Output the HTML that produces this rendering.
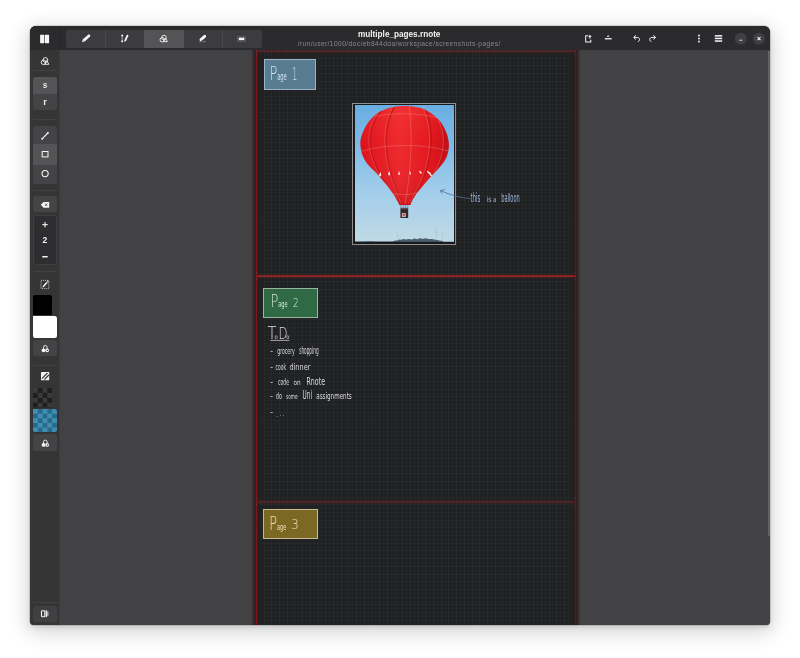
<!DOCTYPE html>
<html lang="en">
<head>
<meta charset="utf-8">
<title>multiple_pages.rnote</title>
<style>
*{box-sizing:border-box;margin:0;padding:0}
html,body{width:800px;height:658px;overflow:hidden;background:#fff;font-family:"Liberation Sans",sans-serif}
.abs{position:absolute}
#win{position:absolute;left:29.600px;top:26px;width:740.900px;height:599.400px;border-radius:6px 6px 4px 4px;overflow:hidden;background:#424244;
 box-shadow:0 0 0 0.5px rgba(0,0,0,.22),0 2px 5px rgba(0,0,0,.12),0 5px 20px 3px rgba(0,0,0,.16);}
#in{position:absolute;left:-29.600px;top:-26px;width:800px;height:658px}
#in>div,#in>svg{position:absolute}
#hdr{left:29.300px;top:26px;width:741.200px;height:24px;background:#2b2b2d}
#side{left:29.500px;top:50px;width:30.700px;height:576px;background:#353536;border-right:.8px solid #3c3c3e}
.sep{left:33px;width:24px;height:.8px;background:#414143}
.btn{background:#444446;border-radius:2.5px}
.on{background:#545456}
.t{position:absolute;white-space:nowrap;line-height:1;will-change:transform}
.hw{position:absolute;white-space:nowrap;line-height:1;font-family:"DejaVu Sans","Liberation Sans",sans-serif;font-weight:200;color:#e4e4e6;transform-origin:0 0;font-style:italic}
.lbl{border:0.8px solid}
</style>
</head>
<body>
<div id="win"><div id="in">
<div id="canvas" style="left:60px;top:50px;width:710px;height:576px;background:#424244"></div>

<div id="doc" style="left:256px;top:50px;width:320px;height:576px;background-color:#202123;
 background-image:repeating-linear-gradient(90deg,rgba(255,255,255,.016) 0,rgba(255,255,255,.016) 1px,transparent 1px,transparent 3.850px),repeating-linear-gradient(180deg,rgba(255,255,255,.016) 0,rgba(255,255,255,.016) 1px,transparent 1px,transparent 3.850px),repeating-linear-gradient(90deg,rgba(255,255,255,.014) 0,rgba(255,255,255,.014) 1px,transparent 1px,transparent 7.700px),repeating-linear-gradient(180deg,rgba(255,255,255,.014) 0,rgba(255,255,255,.014) 1px,transparent 1px,transparent 7.700px)"></div>
<div class="red" style="left:251px;top:50px;width:9px;height:576px;background:linear-gradient(90deg,#414143 0px,#414143 0.5px,#3a3537 1.5px,#322829 2.5px,#30262a 3.5px,#35201f 4.5px,#80151a 5.5px,#40171a 6.5px,#24221f 7.5px,#202123 8.5px,#202123 9px)"></div>
<div class="red" style="left:570.500px;top:50px;width:11px;height:576px;background:linear-gradient(90deg,#202123 0px,#202123 0.5px,#242021 1.5px,#2a1d1f 2.5px,#301b1d 3.5px,#5c1a1e 4.5px,#341c1d 5.5px,#2c2626 6.5px,#2e3233 7.5px,#383a3b 8.5px,#3e3f41 9.5px,#424244 10.5px,#424244 11px)"></div>
<div class="red" style="left:256px;top:49px;width:320px;height:6px;background:linear-gradient(180deg,#2d2829 0px,#2d2829 0.5px,#3c2529 1.5px,#621c22 2.5px,#2c1a1d 3.5px,#231f20 4.5px,#202123 5.5px,#202123 6px);mix-blend-mode:lighten"></div>
<div class="red" style="left:256px;top:272px;width:320px;height:8px;background:linear-gradient(180deg,#202123 0px,#202123 0.5px,#241e20 1.5px,#2c1a1e 2.5px,#84131a 3.5px,#941316 4.5px,#3a1713 5.5px,#221f1f 6.5px,#202123 7.5px,#202123 8px);mix-blend-mode:lighten"></div>
<div class="red" style="left:256px;top:498px;width:320px;height:8px;background:linear-gradient(180deg,#202123 0px,#202123 0.5px,#231f20 1.5px,#2c1c1f 2.5px,#4e1b23 3.5px,#501a22 4.5px,#2c181b 5.5px,#20211f 6.5px,#202123 7.5px,#202123 8px);mix-blend-mode:lighten"></div>


<div id="frame" style="left:352.300px;top:102.800px;width:104px;height:141.800px;border:.8px solid #8e8e8e;background:#19191b"></div>
<svg id="photo" style="left:354.600px;top:104.600px" width="99.600" height="137.400" viewBox="354.600 104.600 99.600 137.400">
<defs>
<linearGradient id="sky" x1="0" y1="0" x2="0" y2="1"><stop offset="0" stop-color="#69aee2"/><stop offset=".3" stop-color="#7fbbe7"/><stop offset=".62" stop-color="#a1cdea"/><stop offset="1" stop-color="#c0dae6"/></linearGradient>
<linearGradient id="bal" x1="0" y1="0" x2="1" y2="0"><stop offset="0" stop-color="#d8131b"/><stop offset=".12" stop-color="#e21820"/><stop offset=".45" stop-color="#ee2a2e"/><stop offset=".8" stop-color="#e0161d"/><stop offset="1" stop-color="#c40f16"/></linearGradient>
<linearGradient id="balv" x1="0" y1="0" x2="0" y2="1"><stop offset="0" stop-color="#ff4a44" stop-opacity=".25"/><stop offset=".4" stop-color="#ff4040" stop-opacity="0"/><stop offset="1" stop-color="#8a0007" stop-opacity=".22"/></linearGradient>
<clipPath id="bc"><path d="M398.4 204.1C398.3 203.7 398.6 203.4 397.7 201.7C396.8 200.0 395.2 196.9 393.1 193.8C391.0 190.7 388.0 186.7 385.1 183.2C382.2 179.7 378.8 175.7 375.9 172.6C373.0 169.5 370.2 167.5 367.9 164.6C365.6 161.7 363.5 158.4 362.2 155.0C360.9 151.6 360.1 147.7 360.0 144.4C359.9 141.1 360.0 138.8 361.3 135.1C362.6 131.3 365.0 125.8 367.9 121.9C370.8 118.0 374.6 114.4 378.5 111.9C382.4 109.4 386.7 108.0 391.0 107.0C395.3 106.0 400.1 105.7 404.3 105.7C408.5 105.7 412.4 106.1 416.0 106.8C419.6 107.5 422.5 107.9 426.2 110.0C429.9 112.1 434.8 115.5 438.1 119.2C441.4 123.0 444.4 128.3 446.1 132.5C447.8 136.7 448.4 140.7 448.5 144.4C448.6 148.2 447.8 151.8 446.7 155.0C445.6 158.2 444.6 159.9 442.1 163.3C439.6 166.7 434.8 171.4 431.5 175.2C428.2 178.9 424.8 182.7 422.2 185.8C419.6 188.9 417.5 191.2 415.6 193.800C413.7 196.5 411.9 200.0 411.0 201.7C410.1 203.4 410.4 203.7 410.3 204.1Z"/></clipPath>
</defs>
<rect x="354.600" y="104.600" width="99.600" height="137.400" fill="url(#sky)"/>
<path d="M398.4 204.1C398.3 203.7 398.6 203.4 397.7 201.7C396.8 200.0 395.2 196.9 393.1 193.8C391.0 190.7 388.0 186.7 385.1 183.2C382.2 179.7 378.8 175.7 375.9 172.6C373.0 169.5 370.2 167.5 367.9 164.6C365.6 161.7 363.5 158.4 362.2 155.0C360.9 151.6 360.1 147.7 360.0 144.4C359.9 141.1 360.0 138.8 361.3 135.1C362.6 131.3 365.0 125.8 367.9 121.9C370.8 118.0 374.6 114.4 378.5 111.9C382.4 109.4 386.7 108.0 391.0 107.0C395.3 106.0 400.1 105.7 404.3 105.7C408.5 105.7 412.4 106.1 416.0 106.8C419.6 107.5 422.5 107.9 426.2 110.0C429.9 112.1 434.8 115.5 438.1 119.2C441.4 123.0 444.4 128.3 446.1 132.5C447.8 136.7 448.4 140.7 448.5 144.4C448.6 148.2 447.8 151.8 446.7 155.0C445.6 158.2 444.6 159.9 442.1 163.3C439.6 166.7 434.8 171.4 431.5 175.2C428.2 178.9 424.8 182.7 422.2 185.8C419.6 188.9 417.5 191.2 415.6 193.800C413.7 196.5 411.9 200.0 411.0 201.7C410.1 203.4 410.4 203.7 410.3 204.1Z" fill="url(#bal)"/>
<path d="M398.4 204.1C398.3 203.7 398.6 203.4 397.7 201.7C396.8 200.0 395.2 196.9 393.1 193.8C391.0 190.7 388.0 186.7 385.1 183.2C382.2 179.7 378.8 175.7 375.9 172.6C373.0 169.5 370.2 167.5 367.9 164.6C365.6 161.7 363.5 158.4 362.2 155.0C360.9 151.6 360.1 147.7 360.0 144.4C359.9 141.1 360.0 138.8 361.3 135.1C362.6 131.3 365.0 125.8 367.9 121.9C370.8 118.0 374.6 114.4 378.5 111.9C382.4 109.4 386.7 108.0 391.0 107.0C395.3 106.0 400.1 105.7 404.3 105.7C408.5 105.7 412.4 106.1 416.0 106.8C419.6 107.5 422.5 107.9 426.2 110.0C429.9 112.1 434.8 115.5 438.1 119.2C441.4 123.0 444.4 128.3 446.1 132.5C447.8 136.7 448.4 140.7 448.5 144.4C448.6 148.2 447.8 151.8 446.7 155.0C445.6 158.2 444.6 159.9 442.1 163.3C439.6 166.7 434.8 171.4 431.5 175.2C428.2 178.9 424.8 182.7 422.2 185.8C419.6 188.9 417.5 191.2 415.6 193.800C413.7 196.5 411.9 200.0 411.0 201.7C410.1 203.4 410.4 203.7 410.3 204.1Z" fill="url(#balv)"/>
<g clip-path="url(#bc)" fill="none">
<g stroke="#b80d14" stroke-width="2.200" opacity=".5">
<path d="M381 110C363 130 364 160 399.400 204"/>
<path d="M394 106C380 130 384 166 401.600 204"/>
<path d="M424.500 108C436 134 432 170 408 204"/>
<path d="M437.500 116C452 140 444 170 410 204"/>
</g>
<path d="M446 120C456 145 446 170 410.500 204L420 204L456 150Z" fill="#a50a11" opacity=".35"/>
<g stroke="#f6a59b" stroke-width=".450" opacity=".7">
<path d="M379.500 110.500C362 130 363 160 399 204"/>
<path d="M392.500 106.500C379 130 383 166 401.400 204"/>
<path d="M409 105.800C412 135 411 170 404.600 204"/>
<path d="M423 108.500C434.500 134 430.500 170 407.600 204"/>
<path d="M436 116C450.500 140 442.500 170 409.800 204"/>
<path d="M374 116C390 112.500 420 112 437 117.500"/>
<path d="M360.500 151C385 143.500 422 143 448 150.500"/>
<path d="M390.500 192.600C396 194.800 412 194.800 417.500 192"/>
</g>
</g>
<g fill="#fcece6"><path d="M378.500 174.800l1.700-3.400.7 3.400-1.500 1.600z"/><path d="M387.600 173.800l1.200-3.200 1 3.500-1.100 1.200z"/><path d="M397.800 173.600l.8-3.200 1 3.400-.900 1z"/><path d="M409 173.200l.4-3 1.300 3.400-.8.800z"/><path d="M419.200 172.600l-.4-2.800 2.800 2.600-.8 1z"/><path d="M427 172l-.6-1.800 3.400 2 1.800 3-.9 1.200-1.800-2.800z"/></g>
<path d="M398.600 203.300h11.800l-.5 1.300h-10.800z" fill="#c9131a"/>
<path d="M400.400 204.600v3.400M402.800 204.600v3.400M405 204.600v3.400M407.400 204.600v3.400" stroke="#3a4350" stroke-width=".450"/>
<rect x="400" y="207.600" width="7.800" height="10.100" rx=".9" fill="#37292a"/>
<rect x="400.500" y="207.400" width="6.800" height="2" fill="#5b4c4b"/>
<path d="M401.400 210.500c.5-1.600 1.700-1.600 2.200 0M404.200 210.300c.5-1.500 1.600-1.500 2.100 0" stroke="#1c1718" stroke-width=".9" fill="none"/>
<rect x="401.500" y="212.900" width="3.800" height="3.500" fill="#e7dfdc"/>
<rect x="402.200" y="213.700" width="2.200" height="1.700" fill="#c0232a"/>
<path d="M354.600 241.200h10l2-.4h6l3 .4h17l2-1 2.400-.2 1.600-1 2.400.4 2-.8 2.600.6 3-.5 2.800.3 2.600-.9 3.200.7 2.400-1.200 2.200.9 3.200-.6 3 .8 3.200-.2 2.800.7 3 .4 3 .7h2.200v1.800h-99.600z" fill="#3c5160" opacity=".9"/>
<path d="M354.600 241.300h99.600v.7h-99.600z" fill="#2b333b"/>
<path d="M397.100 238.400v-6M396.300 233.700h1.600M436.100 238.400v-11.400M435.100 229.200h2M434.800 232h2.600M442.100 238.400v-6.200M441.400 233.600h1.400" stroke="#9ab3c6" stroke-width=".4" fill="none" opacity=".7"/>
</svg>


<div class="lbl" style="left:263.7px;top:58.800px;width:52.700px;height:31px;background:#587c91;border-color:#9db5c2"></div>
<div class="lbl" style="left:263px;top:287.800px;width:54.900px;height:30px;background:#306a44;border-color:#9bb5a5"></div>
<div class="lbl" style="left:263px;top:509.100px;width:54.900px;height:30.100px;background:#7b6822;border-color:#c5b98f"></div>


<svg id="hw" style="left:0;top:0" width="800" height="658" viewBox="0 0 800 658" font-family="'DejaVu Sans','Liberation Sans',sans-serif">
<style>.lt{font-family:'DejaVu Sans Light','DejaVu Sans','Liberation Sans',sans-serif;font-weight:200}</style>
<text id="p1" y="79.6" fill="#cfe2ee"><tspan x="269.4" class="lt" font-size="19.4" textLength="7.8" lengthAdjust="spacingAndGlyphs">P</tspan><tspan x="277.2" font-size="10.2" textLength="9.4" lengthAdjust="spacingAndGlyphs">age</tspan> <tspan x="292" class="lt" font-size="17.6" textLength="5.4" lengthAdjust="spacingAndGlyphs">1</tspan></text>
<text id="p2" y="307.4" fill="#d3e6d9"><tspan x="270.4" class="lt" font-size="17.2" textLength="7.8" lengthAdjust="spacingAndGlyphs">P</tspan><tspan x="278.2" font-size="8.8" textLength="9.4" lengthAdjust="spacingAndGlyphs">age</tspan> <tspan x="293" class="lt" font-size="12.6" textLength="5.6" lengthAdjust="spacingAndGlyphs">2</tspan></text>
<text id="p3" y="530.2" fill="#ece2bd"><tspan x="269.2" class="lt" font-size="19.2" textLength="7.8" lengthAdjust="spacingAndGlyphs">P</tspan><tspan x="277" font-size="8.6" textLength="9.2" lengthAdjust="spacingAndGlyphs">age</tspan> <tspan x="291" y="528.8" class="lt" font-size="14" textLength="7.8" lengthAdjust="spacingAndGlyphs">3</tspan></text>
<text id="h0" y="339.2" fill="#dcdcdd"><tspan x="267.4" class="lt" font-size="18" textLength="9" lengthAdjust="spacingAndGlyphs">T</tspan><tspan x="274.6" font-size="6.4" textLength="3.2" lengthAdjust="spacingAndGlyphs">o</tspan><tspan x="278.4" class="lt" font-size="15.6" textLength="9" lengthAdjust="spacingAndGlyphs">D</tspan><tspan x="286.2" font-size="6.4" textLength="3.2" lengthAdjust="spacingAndGlyphs">o</tspan></text>
<text id="h1" y="353.9" fill="#dcdcdd"><tspan x="270.3" font-size="9" textLength="2.8" lengthAdjust="spacingAndGlyphs">-</tspan> <tspan x="277.2" font-size="8.2" textLength="17.6" lengthAdjust="spacingAndGlyphs">grocery</tspan> <tspan x="299.2" font-size="9.6" textLength="19.4" lengthAdjust="spacingAndGlyphs">shopping</tspan></text>
<text id="h2" y="370.3" fill="#dcdcdd"><tspan x="270.3" font-size="9" textLength="2.8" lengthAdjust="spacingAndGlyphs">-</tspan> <tspan x="275.6" font-size="8.6" textLength="10.4" lengthAdjust="spacingAndGlyphs">cook</tspan> <tspan x="289.4" font-size="9" textLength="21" lengthAdjust="spacingAndGlyphs">dinner</tspan></text>
<text id="h3" y="385" fill="#dcdcdd"><tspan x="270.3" font-size="9" textLength="2.8" lengthAdjust="spacingAndGlyphs">-</tspan> <tspan x="278" font-size="8.6" textLength="11" lengthAdjust="spacingAndGlyphs">code</tspan> <tspan x="293.4" font-size="7.4" textLength="7.2" lengthAdjust="spacingAndGlyphs">on</tspan> <tspan x="306.5" font-size="10.4" textLength="18.5" lengthAdjust="spacingAndGlyphs">Rnote</tspan></text>
<text id="h4" y="399.2" fill="#dcdcdd"><tspan x="270.3" font-size="9" textLength="2.8" lengthAdjust="spacingAndGlyphs">-</tspan> <tspan x="275.8" font-size="9.4" textLength="6.2" lengthAdjust="spacingAndGlyphs">do</tspan> <tspan x="286" font-size="7.4" textLength="11.6" lengthAdjust="spacingAndGlyphs">some</tspan> <tspan x="302.6" font-size="11.6" textLength="9.4" lengthAdjust="spacingAndGlyphs">Uni</tspan> <tspan x="316.2" font-size="8.2" textLength="35.6" lengthAdjust="spacingAndGlyphs">assignments</tspan></text>
<text id="h5" y="414.6" fill="#dcdcdd"><tspan x="270.3" font-size="9" textLength="2.8" lengthAdjust="spacingAndGlyphs">-</tspan> <tspan x="276.6" y="417" font-size="9" textLength="1.2" lengthAdjust="spacingAndGlyphs">.</tspan> <tspan x="279.8" y="416.4" font-size="9" textLength="1.2" lengthAdjust="spacingAndGlyphs">.</tspan> <tspan x="283" y="415.6" font-size="9" textLength="1.2" lengthAdjust="spacingAndGlyphs">.</tspan></text>
<text id="h6" y="201.7" fill="#98b6d8"><tspan x="470.6" font-size="12.4" textLength="9.6" lengthAdjust="spacingAndGlyphs">this</tspan> <tspan x="486.4" font-size="7.6" textLength="5" lengthAdjust="spacingAndGlyphs">is</tspan> <tspan x="493" font-size="7" textLength="3.4" lengthAdjust="spacingAndGlyphs">a</tspan> <tspan x="501.2" font-size="11.6" textLength="18.6" lengthAdjust="spacingAndGlyphs">balloon</tspan></text>
<path d="M270.4 340.400h19" stroke="#dededf" stroke-width=".7" fill="none"/>
<path d="M470 198.600C461 198 452 195.600 440.400 190.600M444.800 189.600l-4.500 1 1.600 2.900" fill="none" stroke="#4d6f9f" stroke-width=".8" stroke-linecap="round" stroke-linejoin="round"/>
</svg>


<div id="hdr">
 <div class="t" id="title" style="left:0;width:740.5px;text-align:center;top:5px;font-size:8.200px;font-weight:bold;color:#f2f2f2">multiple_pages.rnote</div>
 <div class="t" id="sub" style="left:0;width:740.5px;text-align:center;top:15.200px;font-size:6.700px;letter-spacing:.385px;color:#88888a">/run/user/1000/doc/eb844dda/workspace/screenshots-pages/</div>
</div>
<div id="hside" style="left:29.5px;top:26px;width:30.5px;height:24px;background:#2b2b2d;border-right:.7px solid #262628"></div>
<div id="tg" style="left:66px;top:30px;width:196px;height:17.6px;background:#3c3c3e;border-radius:2.5px;overflow:hidden">
  <div class="abs on" style="left:77.700px;top:0;width:40.100px;height:17.600px;border-radius:0"></div>
  <div class="abs" style="left:38.9px;top:0;width:.6px;height:17.6px;background:#48484a"></div>
  <div class="abs" style="left:156.4px;top:0;width:.6px;height:17.6px;background:#48484a"></div>
</div>


<svg id="hic" style="left:0;top:0" width="800" height="60" viewBox="0 0 800 60" fill="#f4f4f4">
<!-- sidebar toggle -->
<rect x="40.100" y="34.700" width="4.200" height="8.500" rx=".4"/><rect x="44.900" y="34.700" width="4.200" height="8.500" rx=".4"/>
<!-- pencil -->
<path d="M83.700 40.400L88 36.700" stroke="#f4f4f4" stroke-width="2.800" fill="none"/><path d="M82.100 42l.5-2.600 2.100 2.100z"/><path d="M88.400 36.300l.5-.450" stroke="#f4f4f4" stroke-width="2.800" stroke-linecap="round" fill="none"/>
<!-- shaper -->
<path d="M122.200 35.600v5.800" stroke="#f4f4f4" stroke-width=".6" fill="none"/><rect x="121.300" y="34.700" width="1.800" height="1.700"/><rect x="121.300" y="40.500" width="1.800" height="1.700"/>
<path d="M125.400 40.200L127.500 35.700" stroke="#f4f4f4" stroke-width="1.900" stroke-linecap="round" fill="none"/><path d="M124.400 41.900l.3-1.900 1.400.7z"/>
<!-- shapes -->
<g fill="none" stroke="#f4f4f4" stroke-width=".9"><circle cx="164" cy="37.6" r="2.3"/><circle cx="162.2" cy="39.8" r="2.2"/><path d="M165.4 38l2 3.6h-4z" stroke-linejoin="round"/></g>
<!-- eraser -->
<path d="M201 39.500L204.700 36.300" stroke="#f4f4f4" stroke-width="2.900" stroke-linecap="round" fill="none"/><path d="M199.200 41.700h7.600" stroke="#f4f4f4" stroke-width=".7" opacity=".6" stroke-dasharray="2.600 1.200"/>
<!-- selection -->
<rect x="238.700" y="37.600" width="5.700" height="2.600"/><rect x="237.500" y="36.300" width="8" height="5.300" fill="none" stroke="#f4f4f4" stroke-width=".6" stroke-dasharray="1 1" opacity=".5"/>
<!-- export page -->
<path d="M585.200 35.200h2.800v1h-1.800v5.400h4.100v-1.900h1v2.900h-6.100z"/><path d="M589.900 34.700l1.800 2.100h-1.200v1.800h-1.200v-1.800h-1.200z"/>
<!-- save -->
<path d="M608.100 35.100l1.400 1.600h-2.800z"/><rect x="604.800" y="38.100" width="6.900" height="1.300"/>
<!-- undo -->
<g fill="none" stroke="#f4f4f4" stroke-width="1"><path d="M633.900 37.400h3.400c1.300 0 2.200.9 2.200 2.100s-.7 2-1.600 2.100"/><path d="M635.900 35.300l-2.200 2.100 2.200 2.100" stroke-linejoin="round"/>
<path d="M655.400 37.400h-3.400c-1.300 0-2.200.9-2.200 2.100s.7 2 1.600 2.100"/><path d="M653.400 35.300l2.200 2.100-2.200 2.100" stroke-linejoin="round"/></g>
<!-- kebab -->
<rect x="698.100" y="34.700" width="1.700" height="1.700"/><rect x="698.100" y="37.700" width="1.700" height="1.700"/><rect x="698.100" y="40.700" width="1.700" height="1.700"/>
<!-- hamburger -->
<rect x="714.800" y="35.100" width="7.400" height="1.500"/><rect x="714.800" y="37.700" width="7.400" height="1.500"/><rect x="714.800" y="40.300" width="7.400" height="1.500"/>
<!-- window buttons -->
<circle cx="740.800" cy="38.700" r="6" fill="#404042"/><circle cx="759" cy="38.700" r="6" fill="#404042"/>
<rect x="739.200" y="39.700" width="3.200" height="1" fill="#d0d0d0"/>
<path d="M757.500 37.200l3 3M760.500 37.200l-3 3" stroke="#f4f4f4" stroke-width="1.050"/>
</svg>


<div id="side"></div>
<div class="sep" style="top:70.2px"></div>
<div class="btn" style="left:33px;top:77.300px;width:24px;height:32.400px"></div>
<div class="btn on" style="left:33px;top:77.300px;width:24px;height:16.400px;border-radius:2.5px 2.5px 0 0"></div>
<div class="t" id="ts" style="left:33px;width:24px;text-align:center;top:80.900px;font-size:9.200px;font-weight:bold;color:#f4f4f4;transform:scaleX(.82)">s</div>
<div class="t" id="tr" style="left:33px;width:24px;text-align:center;top:97.300px;font-size:9.400px;font-weight:bold;color:#f4f4f4;transform:scaleX(.95)">r</div>
<div class="sep" style="top:118.800px"></div>
<div class="btn" style="left:33px;top:125.600px;width:24px;height:58.400px"></div>
<div class="on" style="left:33px;top:144px;width:24px;height:20.600px"></div>
<div class="sep" style="top:190.200px"></div>
<div class="btn" style="left:33px;top:196.200px;width:23.500px;height:16.300px"></div>
<div style="left:32.600px;top:215.300px;width:24.400px;height:49.800px;background:#2e2e30;border:.7px solid #3e3e40;border-radius:2.5px"></div>
<div class="t" id="t2" style="left:33px;width:24px;text-align:center;top:235.600px;font-size:8.600px;font-weight:bold;color:#f0f0f0">2</div>
<div class="sep" style="top:271.200px"></div>
<div style="left:32.800px;top:294.600px;width:19px;height:20.600px;background:#000;border-radius:2px 2px 0 0"></div>
<div style="left:32.600px;top:315.500px;width:24.600px;height:22.200px;background:#fff;border-radius:0 2.500px 2.500px 2px"></div>
<div class="btn" style="left:33px;top:339.800px;width:24px;height:16.400px"></div>
<div class="sep" style="top:365px"></div>
<div style="left:32.800px;top:388.400px;width:19px;height:20px;background-color:#3a3a3c;background-image:conic-gradient(#1f1f20 25%,transparent 0 50%,#1f1f20 0 75%,transparent 0);background-size:9.500px 9.800px"></div>
<div style="left:32.600px;top:408.900px;width:24.600px;height:23.300px;border-radius:0 2.500px 2.500px 2px;background-color:#3f8eb1;background-image:conic-gradient(#296a8a 25%,transparent 0 50%,#296a8a 0 75%,transparent 0);background-size:9.600px 9.300px"></div>
<div class="btn" style="left:33px;top:434.400px;width:24px;height:16.400px"></div>
<div class="sep" style="left:29.500px;width:30.500px;top:602.200px;background:#404042"></div>
<div class="btn" style="left:33px;top:605.700px;width:24px;height:16.300px;background:#404042"></div>
<svg id="sic" style="left:0;top:50px" width="70" height="580" viewBox="0 50 70 580" fill="#f4f4f4">
<!-- shapes icon -->
<g fill="none" stroke="#f4f4f4" stroke-width=".9"><circle cx="45.400" cy="60" r="2.400"/><circle cx="43.500" cy="62.300" r="2.300"/><path d="M46.800 60.600l2.100 3.700h-4.200z" stroke-linejoin="round"/></g>
<!-- line -->
<path d="M42.200 138.800l5.600-5.800" stroke="#f4f4f4" stroke-width="1.100"/><circle cx="42.200" cy="138.800" r="1"/><circle cx="47.900" cy="132.900" r="1"/>
<!-- rect -->
<rect x="42.200" y="151.500" width="5.800" height="5.400" fill="none" stroke="#f4f4f4" stroke-width="1"/>
<!-- circle -->
<circle cx="45.100" cy="173.600" r="3.100" fill="none" stroke="#f4f4f4" stroke-width="1.100"/>
<!-- backspace -->
<path d="M40.800 204.800l2.800-2.900h5.600v5.800h-5.600z"/><path d="M45 203.600l2.400 2.400M47.400 203.600l-2.400 2.400" stroke="#444446" stroke-width=".8"/>
<!-- plus minus -->
<rect x="42.300" y="224.100" width="5.400" height="1.100"/><rect x="44.450" y="221.950" width="1.100" height="5.400"/><rect x="42.200" y="256" width="5.500" height="1.500" rx=".3"/>
<!-- stroke color icon -->
<rect x="41" y="280.400" width="7.800" height="8.200" fill="none" stroke="#f4f4f4" stroke-width=".7" stroke-dasharray="1.100 .9"/><path d="M42.500 287.400l.3-1.500 3.800-4.200 1.100 1-3.800 4.200z"/><path d="M47 281.200l.7-.7 1.100 1-.7.700z"/>
<!-- palette icons -->
<g id="pal1"><path d="M43.500 349v-1.700a1.800 1.800 0 0 1 3.600 0v1.700" fill="none" stroke="#f4f4f4" stroke-width=".9"/><circle cx="43.500" cy="350.300" r="1.900"/><circle cx="47.100" cy="350.300" r="1.900"/><circle cx="47.300" cy="350.400" r=".7" fill="#444446"/></g>
<g id="pal2"><path d="M43.500 443.600v-1.700a1.800 1.800 0 0 1 3.600 0v1.700" fill="none" stroke="#f4f4f4" stroke-width=".9"/><circle cx="43.500" cy="444.900" r="1.900"/><circle cx="47.100" cy="444.900" r="1.900"/><circle cx="47.300" cy="445" r=".7" fill="#444446"/></g>
<!-- fill icon -->
<rect x="41" y="372" width="8.200" height="8.200" rx=".5"/><path d="M42 378.600l5.400-5.600M44.400 379.600l4.400-4.600" stroke="#2c2c2e" stroke-width="1.100"/>
<!-- bottom icon -->
<rect x="41.500" y="610.800" width="3.300" height="5.900" rx=".8" fill="none" stroke="#f4f4f4" stroke-width="1.100"/><rect x="45.700" y="610.300" width="1.200" height="6.900"/><rect x="47.400" y="611.300" width=".9" height="4.900"/>
</svg>

<div id="sb" style="left:768px;top:50.800px;width:2.600px;height:484.800px;background:#626264"></div>
</div></div>
</body>
</html>
